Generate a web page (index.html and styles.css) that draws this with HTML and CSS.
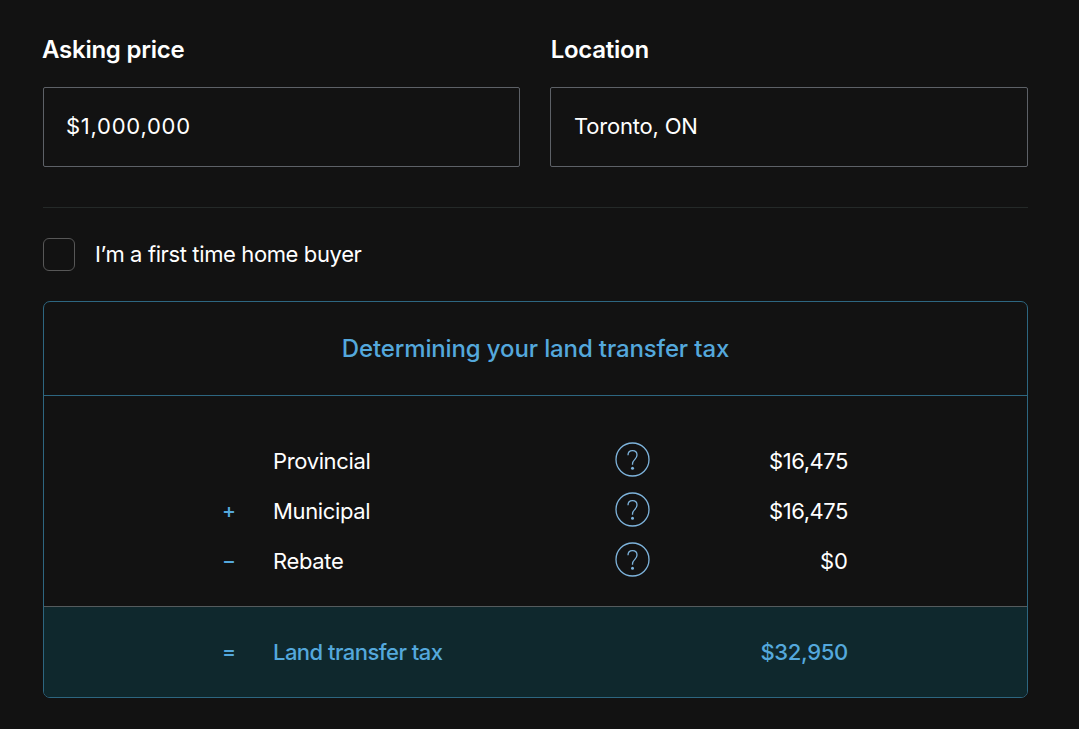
FILE: index.html
```html
<!DOCTYPE html>
<html lang="en">
<head>
    <meta charset="UTF-8">
    <meta name="viewport" content="width=device-width, initial-scale=1.0">
    <title>Land Transfer Tax Calculator</title>
    <link rel="stylesheet" href="styles.css">
</head>
<body>
    <form class="calculator">
        <div class="fields">
            <div class="field">
                <label for="price">Asking price</label>
                <input class="price" id="price" type="text" value="$1,000,000">
            </div>
            <div class="field">
                <label class="location-label" for="location">Location</label>
                <input class="location" id="location" type="text" value="Toronto, ON">
            </div>
        </div>

        <label class="first-time">
            <input type="checkbox">
            <span>I’m a first time home buyer</span>
        </label>

        <div class="card">
            <h2>Determining your land transfer tax</h2>
            <div class="rows">
                <div class="row">
                    <span class="sign"></span>
                    <span class="name">Provincial</span>
                    <svg class="help" viewBox="-0.5 -0.5 36 36"><circle cx="18" cy="18" r="16.5"/><path d="M13.5 13.8C13.5 10.8 15.2 9.2 18 9.2s4.5 1.7 4.5 4.3c0 2.5-1.3 3.5-2.6 4.9-1.3 1.3-1.9 2.3-1.9 4.2v.6"/><circle class="dot" cx="18" cy="26.8" r="1.5"/></svg>
                    <span class="amount">$16,475</span>
                </div>
                <div class="row">
                    <span class="sign">+</span>
                    <span class="name">Municipal</span>
                    <svg class="help" viewBox="-0.5 -0.5 36 36"><circle cx="18" cy="18" r="16.5"/><path d="M13.5 13.8C13.5 10.8 15.2 9.2 18 9.2s4.5 1.7 4.5 4.3c0 2.5-1.3 3.5-2.6 4.9-1.3 1.3-1.9 2.3-1.9 4.2v.6"/><circle class="dot" cx="18" cy="26.8" r="1.5"/></svg>
                    <span class="amount">$16,475</span>
                </div>
                <div class="row">
                    <span class="sign">−</span>
                    <span class="name">Rebate</span>
                    <svg class="help" viewBox="-0.5 -0.5 36 36"><circle cx="18" cy="18" r="16.5"/><path d="M13.5 13.8C13.5 10.8 15.2 9.2 18 9.2s4.5 1.7 4.5 4.3c0 2.5-1.3 3.5-2.6 4.9-1.3 1.3-1.9 2.3-1.9 4.2v.6"/><circle class="dot" cx="18" cy="26.8" r="1.5"/></svg>
                    <span class="amount zero">$0</span>
                </div>
            </div>
            <div class="row total">
                <span class="sign">=</span>
                <span class="name">Land transfer tax</span>
                <span></span>
                <span class="amount">$32,950</span>
            </div>
        </div>
    </form>
</body>
</html>
```
FILE: styles.css
```css
* {
    box-sizing: border-box;
}
body {
    margin: 0;
    background-color: #121212;
    color: #fff;
    font-family: Inter, Lato, sans-serif;
    font-size: 22px;
    line-height: 30px;
}
.calculator {
    width: 985px;
    margin-left: 43px;
    padding-top: 35px;
}
.fields {
    display: grid;
    grid-template-columns: 477px 478px;
    gap: 30px;
    padding-bottom: 40px;
    border-bottom: 1px solid #242928;
}
.field label {
    display: block;
    height: 52px;
    margin-left: -1px;
    font-size: 24px;
    font-weight: 600;
    letter-spacing: -0.25px;
}
.field .location-label {
    margin-left: 0.7px;
}
.field input {
    display: block;
    width: 100%;
    height: 80px;
    padding: 0 23px 3px;
    border: 1px solid #5d6167;
    border-radius: 2px;
    background: none;
    color: #fff;
    font: inherit;
}
.field .price {
    padding-left: 22px;
    letter-spacing: 0.75px;
}
.field .location {
    letter-spacing: -0.2px;
}
.first-time {
    display: flex;
    align-items: center;
    height: 33px;
    margin: 30px 0;
    gap: 20px;
    letter-spacing: -0.38px;
}
.first-time span {
    padding-bottom: 2px;
}
.first-time input {
    appearance: none;
    width: 32px;
    height: 33px;
    margin: 0;
    border: 1px solid #575757;
    border-radius: 6px;
}
.card {
    height: 397px;
    border: 1px solid #2d6680;
    border-radius: 7px;
    overflow: hidden;
}
h2 {
    height: 94px;
    margin: 0;
    padding-top: 32px;
    border-bottom: 1px solid #2d6680;
    color: #54a8dc;
    font-size: 24px;
    font-weight: 500;
    line-height: 30px;
    letter-spacing: -0.13px;
    text-align: center;
}
.rows {
    height: 210px;
    padding-top: 40px;
}
.row {
    display: grid;
    grid-template-columns: 49px 343px 35px 198px;
    align-items: center;
    height: 50px;
    padding-left: 179px;
}
.sign {
    margin-left: -1px;
    color: #54a8dc;
    font-size: 21px;
    font-weight: 500;
}
.name {
    padding-left: 1px;
    letter-spacing: -0.36px;
}
.amount {
    letter-spacing: -0.45px;
    text-align: right;
}
.amount.zero {
    letter-spacing: 0;
}
.help {
    width: 36px;
    height: 36px;
    margin-top: -4px;
    margin-left: -1px;
    fill: none;
    stroke: #7eb4dc;
    stroke-width: 1.3;
}
.help .dot {
    fill: #7eb4dc;
    stroke: none;
}
.total {
    height: 91px;
    border-top: 1px solid #555b5d;
    background-color: #0f282d;
    color: #54a8dc;
    font-weight: 500;
}
.total .name {
    letter-spacing: -0.53px;
}
.total .amount {
    letter-spacing: -0.3px;
}
```
